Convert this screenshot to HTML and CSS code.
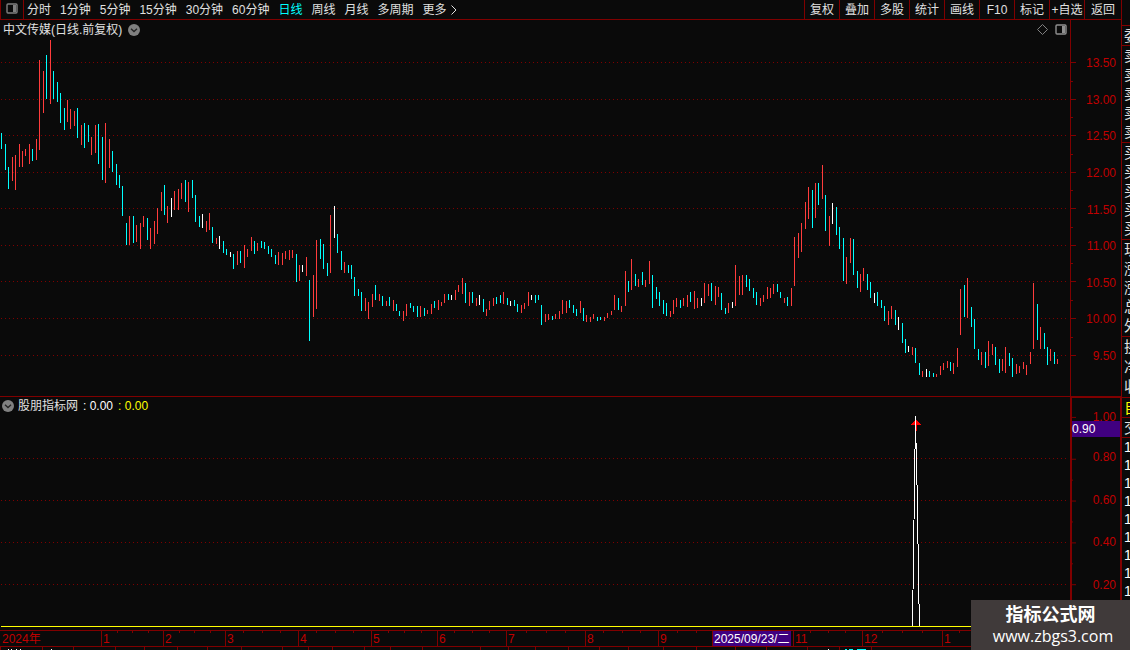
FILE: index.html
```html
<!DOCTYPE html>
<html lang="zh-CN">
<head>
<meta charset="utf-8">
<title>中文传媒 日线</title>
<link rel="stylesheet" href="styles.css">
</head>
<body>
<div class="app">
  <main class="terminal">
    <header class="toolbar">
      <button class="layout-btn" aria-label="布局">
        <svg width="12" height="11" viewBox="0 0 12 11"><rect x="1" y="1" width="10" height="9" rx="1" fill="none" stroke="#808080" stroke-width="1.4"/><rect x="7" y="2" width="3" height="7" fill="#808080"/></svg>
      </button>
      <nav class="periods">
        <button>分时</button><button>1分钟</button><button>5分钟</button><button>15分钟</button><button>30分钟</button><button>60分钟</button><button class="active">日线</button><button>周线</button><button>月线</button><button>多周期</button><button class="more">更多 <svg width="6" height="10" viewBox="0 0 6 10"><path d="M.5 .5L5 5L.5 9.5" fill="none" stroke="#e0e0e0"/></svg></button>
      </nav>
      <div class="tools">
        <button>复权</button><button>叠加</button><button>多股</button><button>统计</button><button>画线</button><button>F10</button><button>标记</button><button>+自选</button><button class="back">返回</button>
      </div>
    </header>

    <section class="panel price">
      <div class="plot">
        <svg class="chart" viewBox="0 20 1070 376" preserveAspectRatio="none" shape-rendering="crispEdges">
          <path class="grid-line" d="M1 62.5H1066M1 99.5H1066M1 135.5H1066M1 172.5H1066M1 208.5H1066M1 245.5H1066M1 281.5H1066M1 318.5H1066M1 355.5H1066"/>
          <g id="bars" transform="translate(.5 0)"></g>
        </svg>
        <div class="caption">
          <span>中文传媒(日线.前复权)</span>
          <button class="round" aria-label="展开"><svg width="12" height="12" viewBox="0 0 12 12"><circle cx="6" cy="6" r="6" fill="#808080"/><path d="M3 4.7L6 7.5L9 4.7" fill="none" stroke="#222" stroke-width="1.3"/></svg></button>
          <span class="corner">
            <svg width="11" height="11" viewBox="0 0 11 11"><path d="M5.5 .5L10.5 5.5L5.5 10.5L.5 5.5Z" fill="none" stroke="#808080"/></svg>
            <svg width="12" height="11" viewBox="0 0 12 11"><rect x="1" y="1" width="10" height="9" rx="1" fill="none" stroke="#909090" stroke-width="1.4"/><rect x="7" y="2" width="3" height="7" fill="#909090"/></svg>
          </span>
        </div>
      </div>
      <div class="scale">
        <svg class="ticks" viewBox="0 20 6 376" preserveAspectRatio="none" shape-rendering="crispEdges"><path d="M0 62.5H5M0 99.5H5M0 135.5H5M0 172.5H5M0 208.5H5M0 245.5H5M0 281.5H5M0 318.5H5M0 355.5H5M0 81.5H2M0 117.5H2M0 154.5H2M0 190.5H2M0 227.5H2M0 263.5H2M0 300.5H2M0 337.5H2"/></svg>
        <ol class="labels">
          <li>13.50</li><li>13.00</li><li>12.50</li><li>12.00</li><li>11.50</li><li>11.00</li><li>10.50</li><li>10.00</li><li>9.50</li>
        </ol>
      </div>
    </section>

    <section class="panel indicator">
      <div class="plot">
        <svg class="chart" viewBox="0 397 1070 233" preserveAspectRatio="none" shape-rendering="crispEdges">
          <path class="grid-line" d="M1 458.5H1066M1 500.5H1066M1 542.5H1066M1 584.5H1066"/>
          <path d="M916 419L921 425H917V431H915V425H911Z" fill="#f00"/>
          <path d="M915.5 416V443M915.1 443L912.5 626M916.3 443L919.4 626" fill="none" stroke="#fff"/>
          <path d="M1 626.5H1070" stroke="#ff0"/>
        </svg>
        <div class="caption">
          <button class="round" aria-label="展开"><svg width="12" height="12" viewBox="0 0 12 12"><circle cx="6" cy="6" r="6" fill="#808080"/><path d="M3 4.7L6 7.5L9 4.7" fill="none" stroke="#222" stroke-width="1.3"/></svg></button>
          <span>股朋指标网</span><span class="value">: 0.00</span><span class="value yellow">: 0.00</span>
        </div>
      </div>
      <div class="scale">
        <svg class="ticks" viewBox="0 397 6 233" preserveAspectRatio="none" shape-rendering="crispEdges"><path d="M0 416.5H4M0 458.5H4M0 500.5H4M0 542.5H4M0 584.5H4M0 479.5H1M0 521.5H1M0 563.5H1"/></svg>
        <ol class="labels">
          <li>1.00</li><li>0.80</li><li>0.60</li><li>0.40</li><li>0.20</li>
        </ol>
        <output class="cursor-value">0.90</output>
      </div>
    </section>

    <div class="timeline">
      <span>2024年</span><span>1</span><span>2</span><span>3</span><span>4</span><span>5</span><span>6</span><span>7</span><span>8</span><span>9</span><span class="cursor-date"><b>2025/09/23/二</b></span><span>11</span><span>12</span><span>1</span>
      <svg class="minor" viewBox="0 0 1121 2" preserveAspectRatio="none" shape-rendering="crispEdges"><path d="M117.5 0v2M132.5 0v2M148.5 0v2M179.5 0v2M194.5 0v2M210.5 0v2M243.5 0v2M262.5 0v2M280.5 0v2M316.5 0v2M335.5 0v2M353.5 0v2M388.5 0v2M404.5 0v2M421.5 0v2M454.5 0v2M472.5 0v2M489.5 0v2M526.5 0v2M546.5 0v2M565.5 0v2M603.5 0v2M622.5 0v2M640.5 0v2M677.5 0v2M696.5 0v2M810.5 0v2M828.5 0v2M845.5 0v2M882.5 0v2M902.5 0v2M922.5 0v2M959.5 0v2"/></svg>
    </div>
    <svg class="tab-edge" viewBox="0 0 1121 3" preserveAspectRatio="none" shape-rendering="crispEdges">
      <path d="M0.5 0v3M42.5 0v3M73.5 0v3M115.5 0v3M144.5 0v3M177.5 0v3M207.5 0v3M241.5 0v3M282.5 0v3M308.5 0v3M332.5 0v3M364.5 0v3M390.5 0v3M422.5 0v3M480.5 0v3M508.5 0v3M535.5 0v3M568.5 0v3M599.5 0v3M628.5 0v3M663.5 0v3M696.5 0v3M735.5 0v3M766.5 0v3M807.5 0v3M839.5 0v3M871.5 0v3" stroke="#800000"/>
      <path d="M8 2.5h1M11 2.5h1M16 2.5h1M20 2.5h1M51 2.5h1M828 2.5h1" stroke="#fff"/>
      <path d="M845 2.5h2M849 2.5h4M857 2.5h9" stroke="#0ff"/>
    </svg>
  </main>

  <aside class="quotes">
    <div class="group head"></div>
    <div class="group one"><span>委</span></div>
    <div class="group five"><span>卖</span><span>卖</span><span>卖</span><span>卖</span><span>卖</span></div>
    <div class="group five"><span>买</span><span>买</span><span>买</span><span>买</span><span>买</span></div>
    <div class="group five"><span>现</span><span>涨</span><span>涨</span><span>总</span><span>外</span></div>
    <div class="group three"><span>换</span><span>净</span><span>收</span></div>
    <div class="group one yellow"><span>自</span></div>
    <div class="group one"><span>交</span></div>
    <div class="group trades"><span>1</span><span>1</span><span>1</span><span>1</span><span>1</span><span>1</span><span>1</span><span>1</span><span>1</span></div>
  </aside>

  <div class="watermark"><strong>指标公式网</strong><span>www.zbgs3.com</span></div>
</div>
<script src="chart.js"></script>
</body>
</html>
```

FILE: styles.css
```css
* { box-sizing: border-box; }

body {
  margin: 0;
  background: #0a0a0a;
  color: #e0e0e0;
  font: 12px/16px "Liberation Sans", "Noto Sans CJK SC", sans-serif;
}

button {
  margin: 0;
  padding: 0;
  border: 0;
  background: none;
  color: inherit;
  font: inherit;
  white-space: nowrap;
}

svg { display: block; }

.app {
  position: relative;
  display: grid;
  grid-template-columns: minmax(0, 1fr) 9px;
  height: 100vh;
  overflow: hidden;
}

.terminal {
  display: grid;
  grid-template-rows: 20px minmax(0, 377fr) minmax(0, 233fr) 17px 3px;
  min-width: 0;
  min-height: 0;
}

/* Toolbar */
.toolbar {
  display: flex;
  border-bottom: 1px solid #800000;
}

.layout-btn {
  display: flex;
  align-items: center;
  justify-content: center;
  width: 24px;
  padding-bottom: 2px;
  border: solid #800000;
  border-width: 0 1px;
}

.periods {
  display: flex;
  gap: 9px;
  padding-left: 3px;
}

.active { color: #0ff; }

.more {
  display: flex;
  align-items: center;
  gap: 4px;
}

.tools {
  display: flex;
  margin-left: auto;
}

.tools button {
  width: 35px;
  border-left: 1px solid #800000;
}

.tools .back { width: 37px; }

/* Chart panels */
.panel {
  display: grid;
  grid-template-columns: minmax(0, 1fr) 51px;
  min-height: 0;
}

.price { border-bottom: 1px solid #800000; }

.plot {
  display: grid;
  min-height: 0;
}

.plot > * { grid-area: 1 / 1; }

.chart {
  width: 100%;
  height: 100%;
  min-height: 0;
}

.grid-line {
  fill: none;
  stroke: #800000;
  stroke-dasharray: 1 3;
}

.caption {
  display: flex;
  align-items: center;
  align-self: start;
  height: 19px;
  padding: 0 3px;
}

.price .round { margin-left: 6px; }

.indicator .caption {
  height: 17px;
  padding: 0 2px;
}

.indicator .round { margin-right: 4px; }

.value {
  margin-left: 5px;
  color: #fff;
}

.value.yellow,
.yellow { color: #ff0; }

.corner {
  display: flex;
  gap: 7px;
  margin-left: auto;
}

.scale {
  position: relative;
  display: flex;
  min-height: 0;
  border-left: 1px solid #800000;
}

.ticks {
  width: 6px;
  height: 100%;
  fill: none;
  stroke: #800000;
}

.labels {
  display: flex;
  flex: 1;
  flex-direction: column;
  margin: 0;
  padding: 25px 5px 22px 0;
  color: #c00000;
  list-style: none;
  text-align: right;
}

.labels li {
  display: flex;
  flex: 1;
  align-items: center;
  justify-content: flex-end;
}

.indicator .scale {
  border: solid #800000;
  border-width: 1px 1px 0 2px;
}

.indicator .labels {
  padding: 0 4px 24px 0;
}

.indicator .labels li:first-child { flex-grow: 0.9; }

.cursor-value {
  position: absolute;
  top: 23px;
  left: 0;
  right: 0;
  background: #400080;
  color: #fff;
}

/* Date axis */
.timeline {
  position: relative;
  display: grid;
  grid-template-columns: 101fr 62fr 62fr 73fr 73fr 66fr 69fr 79fr 73fr 54fr 81fr 69fr 80fr 179fr;
  border: solid #800000;
  border-width: 1px 0;
  color: #c00000;
  line-height: 16px;
}

.timeline span {
  min-width: 0;
  height: 15px;
  padding-left: 1px;
  border-left: 1px solid #800000;
  white-space: nowrap;
}

.timeline span:first-child { border-left-color: transparent; }

.timeline .cursor-date { padding: 0; }

.cursor-date b {
  display: block;
  width: 78px;
  height: 15px;
  padding-left: 1px;
  background: #400080;
  color: #fff;
  font-weight: normal;
}

.minor {
  position: absolute;
  top: 0;
  left: 0;
  width: 100%;
  height: 2px;
  stroke: #800000;
}

.tab-edge {
  width: 100%;
  height: 3px;
}

/* Quote column, cut off by the window edge */
.quotes {
  display: flex;
  flex-direction: column;
  min-height: 0;
  overflow: hidden;
  border-left: 1px solid #800000;
  font-size: 15px;
}

.group {
  display: flex;
  flex-direction: column;
  padding-left: 2px;
  border-bottom: 1px solid #800000;
}

.group span {
  display: flex;
  flex: 1;
  align-items: center;
}

.head { height: 26px; }
.one { height: 20px; }
.five { height: 97px; }
.three { height: 61px; }

.trades {
  border: 0;
  color: #fff;
}

.trades span {
  flex: 0 0 18px;
  font-size: 14px;
}

.watermark {
  position: absolute;
  right: 0;
  bottom: 0;
  display: flex;
  flex-direction: column;
  align-items: center;
  width: 159px;
  height: 50px;
  padding-top: 5px;
  background: #403a3a;
  color: #fff;
}

.watermark strong {
  font-size: 18px;
  line-height: 20px;
}

.watermark span {
  padding-left: 5px;
  font: 16px/22px "Open Sans", "Noto Sans", sans-serif;
}
```

FILE: chart.js
```js
// Each bar is "x high low"; bars are grouped by colour.
const series = {
  "#ff3c3c": `12 157 181,15 155 190,19 144 167,22 151 167,25 149 156,29 144 164,36 139 160,39 60 150,43 71 113,50 40 104,
67 100 122,70 109 129,74 111 126,81 125 145,91 137 155,95 125 153,105 123 183,109 139 168,129 216 245,136 225 242,
140 223 249,143 216 227,150 228 249,154 221 244,157 208 234,161 192 211,167 206 223,174 191 210,178 189 210,181 183 199,
188 182 212,206 221 232,209 213 230,216 238 244,237 251 265,244 245 268,247 249 257,251 237 251,257 243 251,278 252 265,
282 253 265,285 251 259,289 250 260,292 250 258,299 265 281,306 257 276,313 275 317,316 240 309,330 215 273,344 262 273,
365 298 311,368 302 319,372 294 307,379 294 301,386 301 306,393 300 311,403 311 321,406 304 316,420 306 317,427 310 314,
431 304 314,438 300 310,441 302 306,444 294 303,455 290 300,458 285 292,462 278 294,469 292 306,476 298 306,486 309 316,
489 301 310,493 298 306,503 292 304,521 305 313,524 303 309,528 292 306,545 314 322,548 314 320,555 314 319,559 311 319,
562 300 314,566 301 313,580 301 313,586 315 322,590 317 322,593 314 319,604 317 321,607 313 318,611 311 315,614 295 310,
621 306 312,625 271 306,631 259 290,638 279 287,645 280 287,649 261 284,670 311 317,673 300 314,676 298 307,683 298 306,
687 295 307,694 291 309,697 298 308,704 283 303,708 284 296,715 286 305,718 287 297,728 303 313,735 265 306,739 276 295,
742 275 295,760 298 306,763 295 302,767 287 299,770 288 298,773 284 294,784 298 303,791 288 306,794 237 286,798 233 258,
801 223 252,805 202 229,808 187 219,815 183 218,822 165 199,829 216 246,846 257 284,850 238 263,860 274 292,863 268 281,
888 311 325,891 306 319,912 347 355,922 371 377,936 374 377,940 366 375,943 363 370,947 361 368,953 363 374,957 348 367,
960 289 335,967 278 318,981 352 365,988 341 366,992 344 355,1002 359 371,1005 347 373,1016 364 374,1019 366 373,
1023 362 369,1026 365 375,1030 352 364,1033 283 349,1040 327 349,1050 349 361,1057 359 364`,
  "#00ffff": `1 133 149,5 144 170,8 167 189,32 149 161,46 55 99,53 71 99,57 82 102,60 93 123,64 108 130,77 108 138,
84 123 148,88 125 142,98 124 164,102 137 180,112 151 172,116 164 185,119 175 188,122 186 216,126 223 245,133 216 243,
147 218 240,164 185 215,185 180 202,192 180 198,195 195 222,199 216 227,212 227 243,223 241 253,226 249 255,233 254 269,
240 251 263,254 241 254,261 241 248,264 242 249,268 246 254,271 249 257,275 255 264,296 254 282,309 280 341,320 239 259,
323 244 269,327 263 276,337 234 253,341 251 270,348 265 273,351 265 279,354 277 296,358 289 296,361 292 311,375 285 300,
382 296 306,389 297 306,396 304 311,399 311 316,410 303 308,413 306 312,417 306 317,424 308 316,434 301 308,448 294 300,
465 283 303,472 292 303,483 299 312,496 297 304,500 295 303,507 298 305,514 300 306,517 304 312,535 295 303,538 295 300,
541 305 325,552 316 320,569 300 308,573 305 313,576 309 316,583 308 321,597 317 321,600 317 320,618 298 310,628 281 292,
635 274 286,642 272 285,652 275 308,656 287 299,659 292 306,663 300 314,666 303 316,680 300 308,690 292 302,711 283 301,
721 293 310,725 308 314,746 275 287,749 279 291,753 288 298,756 292 305,777 284 292,780 292 298,787 297 306,812 190 228,
818 183 205,825 195 231,836 207 235,839 227 249,843 238 281,853 239 275,857 271 288,867 274 290,870 282 298,877 292 306,
881 300 308,884 306 321,895 310 325,902 323 343,905 339 353,915 348 363,919 363 375,929 371 377,933 373 377,950 362 371,
964 285 317,971 307 327,974 319 349,978 349 360,985 352 368,995 347 365,999 359 373,1009 353 366,1012 358 377,
1037 304 340,1044 333 349,1047 347 365,1054 352 364`,
  "#ffffff": `171 198 217,202 214 228,219 236 249,230 252 257,302 265 272,334 206 238,451 295 300,479 295 305,510 301 306,
531 295 300,701 298 306,732 302 308,832 203 224,874 293 303,898 317 330,908 346 352,926 369 377`
};

const layer = document.getElementById("bars");
for (const [color, list] of Object.entries(series)) {
  const path = document.createElementNS("http://www.w3.org/2000/svg", "path");
  path.setAttribute("stroke", color);
  path.setAttribute("d", list.split(",").map(bar => {
    const [x, high, low] = bar.trim().split(" ");
    return `M${x} ${high}V${low}`;
  }).join(""));
  layer.append(path);
}
```
